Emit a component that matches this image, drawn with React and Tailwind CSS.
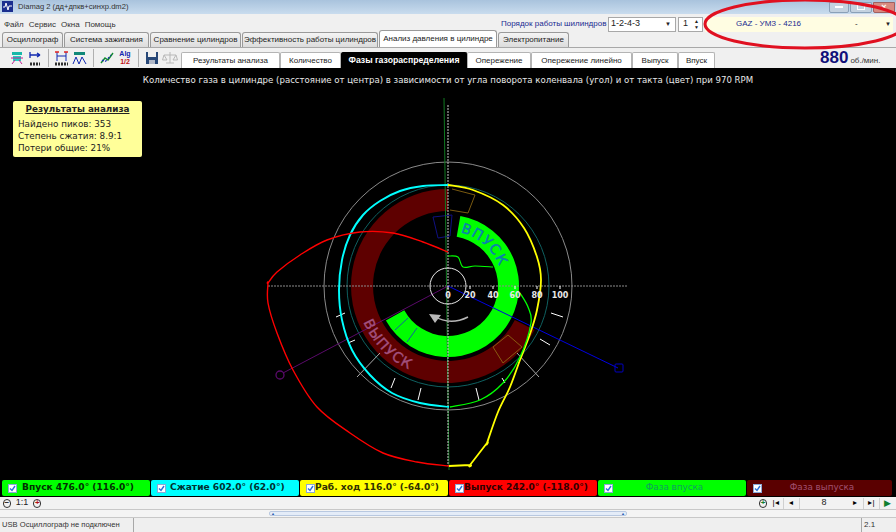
const CX = 448
const CY = 286

// clockwise from the top of the diagram
function pt(r, deg) {
  const a = (deg * Math.PI) / 180
  return [CX + r * Math.sin(a), CY - r * Math.cos(a)]
}

function ring(r1, r2, a1, a2) {
  const [x1, y1] = pt(r2, a1)
  const [x2, y2] = pt(r2, a2)
  const [x3, y3] = pt(r1, a2)
  const [x4, y4] = pt(r1, a1)
  const big = a2 - a1 > 180 ? 1 : 0
  return `M${x1} ${y1}A${r2} ${r2} 0 ${big} 1 ${x2} ${y2}L${x3} ${y3}A${r1} ${r1} 0 ${big} 0 ${x4} ${y4}Z`
}

function arc(r, a1, a2, sweep) {
  const [x1, y1] = pt(r, a1)
  const [x2, y2] = pt(r, a2)
  return `M${x1} ${y1}A${r} ${r} 0 0 ${sweep} ${x2} ${y2}`
}

// smooth line through the traced points
function smooth(p) {
  let d = `M${p[0][0]} ${p[0][1]}`
  for (let i = 0; i < p.length - 1; i++) {
    const a = p[Math.max(i - 1, 0)]
    const b = p[i]
    const c = p[i + 1]
    const e = p[Math.min(i + 2, p.length - 1)]
    d += `C${b[0] + (c[0] - a[0]) / 6} ${b[1] + (c[1] - a[1]) / 6} ${c[0] - (e[0] - b[0]) / 6} ${c[1] - (e[1] - b[1]) / 6} ${c[0]} ${c[1]}`
  }
  return d
}

const cyan = [[448, 185], [423, 186], [400, 191], [380, 201], [363, 215], [350, 235], [342, 260], [339, 290], [342, 320], [352, 350], [370, 375], [392, 393], [420, 403], [449, 407]]
const yellow = [[448, 185], [473, 190], [503, 205], [524, 228], [537, 257], [541, 280], [537, 310], [530, 334], [520, 360], [510, 387], [498, 412], [487, 443], [487, 443], [470, 465], [470, 465], [449, 466]]
const red = [[449, 466], [417, 462], [383, 453], [350, 433], [317, 407], [293, 370], [277, 333], [268, 303], [268, 283], [268, 283], [277, 272], [300, 255], [327, 240], [360, 232], [393, 233], [423, 242], [448, 252]]
const greenOuter = [[450, 407], [480, 400], [503, 383], [520, 357], [531, 323], [528, 307], [520, 293]]
const greenInner = [[448, 256], [458, 257], [463, 267], [475, 266], [493, 267]]

const ticks = [
  [336, 317, 345, 313, '#fff'], [348, 343, 355, 340, '#fff'], [357, 377, 380, 353, '#aaa'], [391, 388, 395, 378, '#fff'],
  [418, 400, 421, 388, '#fff'], [479, 400, 476, 388, '#fff'], [505, 383, 502, 378, '#fff'], [539, 377, 517, 353, '#aaa'],
  [550, 345, 540, 339, '#fff'], [563, 317, 551, 313, '#fff'],
]

const labels = [[448, '0'], [470, '20'], [493, '40'], [515, '60'], [537, '80'], [560, '100']]

function Diagram() {
  return (
    <svg width="896" height="412" viewBox="0 68 896 412" className="block">
      <defs>
        <path id="inletPath" d={arc(55, 13, 66, 1)} />
        <path id="exhaustPath" d={arc(92, 247, 200, 0)} />
      </defs>

      <circle cx={CX} cy={CY} r="124" fill="none" stroke="#8a8a8a" />
      <path d={ring(75, 97, 117, 360)} fill="#5e0000" />
      <path d={ring(71, 74, 100, 245)} fill="#000" />
      <path d={ring(50, 71, 10, 241)} fill="#00ff00" />
      <circle cx={CX} cy={CY} r="101" fill="none" stroke="#0f6060" />

      <path d="M452 189L475 195L468 213L450 210" fill="none" stroke="#7a5a10" />
      <path d="M433 217L452 215L450 236L438 238Z" fill="none" stroke="#101080" />
      <path d="M493 347L508 335L522 347L503 363Z" fill="none" stroke="#8a5a10" />
      <path d="M395 330L408 318M407 342L417 328" stroke="#1060a0" />

      <path d="M268 286H628" stroke="#8c8c8c" strokeDasharray="2 1" />
      <path d="M444 98L449 470" stroke="#0f7a20" />
      <path d="M448 105V466" stroke="#c8c8c8" strokeDasharray="2 1" />

      <path d="M448 286L618 368" stroke="#0000e0" />
      <rect x="615" y="364" width="8" height="8" rx="1" fill="none" stroke="#0000c0" />
      <path d="M448 286L283 373" stroke="#5a0a6a" />
      <circle cx="280" cy="375" r="4" fill="none" stroke="#5a0a6a" strokeWidth="1.3" />

      {ticks.map((t, i) => (
        <path key={i} d={`M${t[0]} ${t[1]}L${t[2]} ${t[3]}`} stroke={t[4]} />
      ))}

      <circle cx={CX} cy={CY} r="18" fill="none" stroke="#e8e8e8" />
      <path d="M468 317Q450 326 434 316" fill="none" stroke="#b8b8b8" strokeWidth="1.4" />
      <path d="M429 314L441 315L435 323Z" fill="#b8b8b8" />

      <path d={smooth(cyan)} fill="none" stroke="#00ffff" strokeWidth="1.9" />
      <path d={smooth(yellow)} fill="none" stroke="#ffff00" strokeWidth="1.8" />
      <path d={smooth(red)} fill="none" stroke="#ff0000" strokeWidth="1.4" />
      <path d={smooth(greenOuter)} fill="none" stroke="#00ff00" strokeWidth="1.3" />
      <path d={smooth(greenInner)} fill="none" stroke="#00ff00" strokeWidth="1.1" />

      {labels.map(([x, text]) => (
        <g key={text}>
          <path d={`M${x} 286V289`} stroke="#fff" />
          <text x={x} y="298" textAnchor="middle" fill="#e8e8e8" className="font-['DejaVu_Sans',sans-serif] text-[8px] font-bold">{text}</text>
        </g>
      ))}

      <text fill="#0b7fb0" letterSpacing="1.2" stroke="#0b7fb0" strokeWidth="0.4" className="font-['DejaVu_Sans',sans-serif] text-[14px]">
        <textPath href="#inletPath">ВПУСК</textPath>
      </text>
      <text fill="#a2507e" letterSpacing="1.2" stroke="#a2507e" strokeWidth="0.4" className="font-['DejaVu_Sans',sans-serif] text-[14px]">
        <textPath href="#exhaustPath">ВЫПУСК</textPath>
      </text>
    </svg>
  )
}

function Tab({ w, active, children }) {
  return (
    <div className={`flex ${w} items-center justify-center self-end whitespace-nowrap rounded-t-[3px] border border-b-0 border-[#9a9a9a] ${active ? 'h-[17px] bg-white' : 'h-[15px] bg-gradient-to-b from-[#f4f4f4] to-[#dcdcdc]'}`}>
      {children}
    </div>
  )
}

function SubTab({ w, active, children }) {
  return (
    <div className={`flex h-[16px] ${w} items-center justify-center whitespace-nowrap rounded-t-[2px] border border-b-0 ${active ? 'border-black bg-black text-[8.7px] font-bold text-white' : 'border-[#b4b4b4] bg-white text-[#222]'}`}>
      {children}
    </div>
  )
}

function ToolSep() {
  return <div className="mx-[4px] h-[18px] w-px bg-[#b0b0b0]" />
}

function ToolIcon({ children }) {
  return (
    <svg width="16" height="16" viewBox="0 0 16 16" className="mx-[1px] shrink-0">
      {children}
    </svg>
  )
}

function Legend({ w, bg, color, gap, children }) {
  return (
    <div className={`flex h-[16px] ${w} items-center rounded-[2px] pl-[6px] ${bg}`}>
      <span className="flex h-[9px] w-[9px] shrink-0 items-center justify-center border border-[#8aa8d8] bg-white">
        <svg width="7" height="7" viewBox="0 0 7 7">
          <path d="M1 3.5L3 5.5L6 1" fill="none" stroke="#2a70d8" strokeWidth="1.4" />
        </svg>
      </span>
      {gap ? (
        <span className={`${gap} whitespace-nowrap font-['DejaVu_Sans',sans-serif] text-[9.1px] font-bold ${color}`}>{children}</span>
      ) : (
        <span className={`flex-1 pr-[10px] text-center font-['DejaVu_Sans',sans-serif] text-[8.8px] ${color}`}>{children}</span>
      )}
    </div>
  )
}

function NavButton({ children }) {
  return <div className="flex h-[11px] w-[16px] items-center justify-center border-r border-[#d0d0d0] text-[8px] leading-none text-black">{children}</div>
}

export default function App() {
  return (
    <div className="relative flex h-[532px] w-[896px] flex-col overflow-hidden bg-[#f0f0f0] font-['Liberation_Sans',sans-serif] text-[8px] text-[#222]">
      {/* title bar */}
      <div className="flex h-[14px] items-center justify-between bg-gradient-to-b from-[#a9c3dd] to-[#c9dcee]">
        <div className="flex items-center">
          <svg width="11" height="11" viewBox="0 0 11 11" className="ml-[2px]">
            <rect width="11" height="11" fill="#1b2f8f" />
            <path d="M1 6H3L4 2L6 9L7 5H10" fill="none" stroke="#fff" />
          </svg>
          <span className="ml-[5px] text-[7.6px] text-[#333]">Diamag 2 (дд+дпкв+синхр.dm2)</span>
        </div>
        <div className="mr-[1px] flex h-[11px] items-center gap-[1px]">
          <div className="flex h-full w-[20px] items-center justify-center rounded-b-[2px] border border-[#8aa0b8] bg-[#c4d2e0]"><div className="h-[2px] w-[8px] bg-white" /></div>
          <div className="flex h-full w-[22px] items-center justify-center rounded-b-[2px] border border-[#8aa0b8] bg-[#c4d2e0]"><div className="h-[6px] w-[8px] border border-white" /></div>
          <div className="flex h-full w-[22px] items-center justify-center rounded-b-[2px] border border-[#a06060] bg-[#d88a80] text-[9px] font-bold leading-none text-white">×</div>
        </div>
      </div>

      {/* menu row */}
      <div className="flex h-[18px] items-center pt-[2px]">
        <div className="ml-[4px] flex w-[497px] gap-[5px] pt-[2px] text-[8px] text-[#333]">
          <span>Файл</span>
          <span>Сервис</span>
          <span>Окна</span>
          <span>Помощь</span>
        </div>
        <span className="w-[107px] whitespace-nowrap text-[8px] text-[#1a2a90]">Порядок работы шилиндров</span>
        <div className="flex h-[15px] w-[68px] items-center justify-between border border-[#a8a8a8] bg-white pl-[2px] pr-[4px] text-[9px]">
          <span>1-2-4-3</span>
          <span className="text-[6px] leading-none">▼</span>
        </div>
        <div className="ml-[2px] flex h-[15px] w-[25px] items-center justify-between border border-[#a8a8a8] bg-white pl-[4px] pr-[3px] text-[9px]">
          <span>1</span>
          <span className="flex flex-col text-[5px] leading-[6px]"><span>▲</span><span>▼</span></span>
        </div>
        <div className="ml-[2px] flex h-[15px] w-[188px] items-center bg-[#fffde2] pl-[31px] pr-[2px]">
          <span className="w-[119px] text-[#1a2a90]">GAZ - УМЗ - 4216</span>
          <span className="flex-1">-</span>
          <span className="text-[6px] leading-none">▼</span>
        </div>
      </div>

      {/* main tabs */}
      <div className="flex h-[16px] items-end gap-[1px] border-b border-[#a8a8a8] pl-[2px] text-[8px] text-[#222]">
        <Tab w="w-[61px]">Осциллограф</Tab>
        <Tab w="w-[85px]">Система зажигания</Tab>
        <Tab w="w-[91px]">Сравнение цилиндров</Tab>
        <Tab w="w-[136px]">Эффективность работы цилиндров</Tab>
        <Tab w="w-[118px]" active>Анализ давления в цилиндре</Tab>
        <Tab w="w-[71px]">Электропитание</Tab>
      </div>

      {/* toolbar with sub tabs */}
      <div className="flex h-[20px] items-end text-[8px]">
        <div className="ml-[8px] flex w-[173px] items-center self-center">
          <ToolIcon>
            <rect x="3" y="2" width="10" height="3" fill="#18b8a8" />
            <rect x="4" y="6" width="8" height="5" fill="#20d0c0" />
            <path d="M2 8H14M3 14L6 10M13 14L10 10" stroke="#c02090" />
          </ToolIcon>
          <ToolIcon>
            <path d="M3 2V8M3 5H12M13 5L10 3M13 5L10 7" fill="none" stroke="#1028b0" strokeWidth="1.3" />
            <path d="M3 14H13" stroke="#303030" strokeDasharray="2 1" strokeWidth="3" />
          </ToolIcon>
          <ToolSep />
          <ToolIcon>
            <path d="M3 2V11M12 2V11M3 6H12" stroke="#1028b0" />
            <path d="M1 2H5" stroke="#e02020" strokeWidth="1.5" />
            <path d="M10 2H14" stroke="#e02020" strokeWidth="1.5" />
            <path d="M1 14H14" stroke="#303030" strokeDasharray="2 1" strokeWidth="3" />
          </ToolIcon>
          <ToolIcon>
            <rect x="2" y="2" width="11" height="3" fill="#108878" />
            <path d="M1 14L4 7L7 14L10 7L14 14" fill="none" stroke="#1028b0" />
          </ToolIcon>
          <ToolSep />
          <ToolIcon>
            <path d="M2 13L6 8L9 10L14 3" fill="none" stroke="#108830" strokeWidth="1.4" />
            <path d="M3 10L6 12L12 5" fill="none" stroke="#1028b0" strokeWidth="1.2" strokeDasharray="2 2" />
          </ToolIcon>
          <div className="mx-[1px] flex w-[16px] flex-col items-center text-[7px] font-bold leading-[8px]">
            <span className="text-[#1028b0]">Alg</span>
            <span className="text-[#c01010]">1/2</span>
          </div>
          <ToolSep />
          <ToolIcon>
            <rect x="2" y="2" width="12" height="12" fill="#284878" />
            <rect x="4" y="2" width="8" height="5" fill="#f0f0f0" />
            <rect x="5" y="10" width="6" height="4" fill="#b0b8c8" />
          </ToolIcon>
          <ToolIcon>
            <path d="M8 2V13M4 13H12M2 5H14M2 5L0.5 10H5ZM14 5L11 10H15.5Z" fill="none" stroke="#b8b8b8" />
          </ToolIcon>
        </div>
        <SubTab w="w-[99px]">Результаты анализа</SubTab>
        <SubTab w="w-[61px]">Количество</SubTab>
        <SubTab w="w-[126px]" active>Фазы газораспределения</SubTab>
        <SubTab w="w-[64px]">Опережение</SubTab>
        <SubTab w="w-[101px]">Опережение линейно</SubTab>
        <SubTab w="w-[46px]">Выпуск</SubTab>
        <SubTab w="w-[37px]">Впуск</SubTab>
        <div className="ml-[105px] flex items-baseline whitespace-nowrap pb-[1px]">
          <span className="text-[17px] font-bold leading-[18px] text-[#10107a]">880</span>
          <span className="ml-[2px] text-[8px] text-[#333]">об./мин.</span>
        </div>
      </div>

      {/* plot */}
      <div className="relative h-[412px] bg-black">
        <Diagram />
        <div className="absolute left-0 right-0 top-[6px] text-center font-['DejaVu_Sans',sans-serif] text-[8.6px] leading-[12px] text-[#e8e8e8]">
          Количество газа в цилиндре (расстояние от центра) в зависимости от угла поворота коленвала (угол) и от такта (цвет) при 970 RPM
        </div>
        <div className="absolute left-[13px] top-[33px] h-[56px] w-[129px] rounded-[2px] bg-[#ffff99] px-[5px] pt-[2px] font-['DejaVu_Sans',sans-serif] text-[8.8px] leading-[12px] text-[#222]">
          <div className="mb-[3px] text-center font-bold underline">Результаты анализа</div>
          <div>Найдено пиков: 353</div>
          <div>Степень сжатия: 8.9:1</div>
          <div>Потери общие: 21%</div>
        </div>
      </div>

      {/* legend */}
      <div className="flex h-[17px] gap-[1px] bg-black pl-[2px]">
        <Legend w="w-[148px]" bg="bg-[#00ff00]" color="text-[#003000]" gap="ml-[5px]">Впуск 476.0° (116.0°)</Legend>
        <Legend w="w-[148px]" bg="bg-[#00ffff]" color="text-[#003030]" gap="ml-[4px]">Сжатие 602.0° (62.0°)</Legend>
        <Legend w="w-[148px]" bg="bg-[#ffff00]" color="text-[#303000]" gap="ml-0">Раб. ход 116.0° (-64.0°)</Legend>
        <Legend w="w-[148px]" bg="bg-[#ff0000]" color="text-[#300000]" gap="ml-0">Выпуск 242.0° (-118.0°)</Legend>
        <Legend w="w-[148px]" bg="bg-[#00ff00]" color="text-[#10a060]">Фаза впуска</Legend>
        <Legend w="w-[145px]" bg="bg-[#5a0000]" color="text-[#a05070]">Фаза выпуска</Legend>
      </div>

      {/* zoom and navigation row */}
      <div className="flex h-[12px] items-center bg-[#f2f2f2] text-[9px]">
        <span className="ml-[3px] flex h-[9px] w-[9px] items-center justify-center rounded-full border border-[#333] text-[8px] font-bold leading-none">−</span>
        <span className="w-[27px] text-center">1:1</span>
        <span className="flex h-[9px] w-[9px] items-center justify-center rounded-full border border-[#333] text-[8px] font-bold leading-none text-[#b01010]">+</span>
        <span className="ml-[718px] flex h-[9px] w-[9px] items-center justify-center rounded-full border border-[#333] text-[8px] font-bold leading-none text-[#108030]">+</span>
        <div className="ml-[1px] flex items-center">
          <NavButton>|◂</NavButton>
          <NavButton>◂</NavButton>
          <span className="w-[48px] text-center text-[9px]">8</span>
          <NavButton>▸</NavButton>
          <NavButton>▸|</NavButton>
          <div className="w-[16px] text-center text-[9px] leading-none text-[#108030]">▶</div>
        </div>
      </div>

      {/* scroll bar */}
      <div className="flex h-[9px] items-center border-y border-[#c8c8c8] bg-[#f4f4f4] pl-[269px]">
        <div className="flex h-[5px] w-[358px] items-center justify-between rounded-[2px] border border-[#b8c8e0] bg-[#e4ecf8] px-[1px] text-[4px] leading-none text-[#3060b0]">
          <span>▲</span>
          <span>▲</span>
        </div>
      </div>

      {/* status bar */}
      <div className="flex flex-1 items-center bg-[#efefef] text-[7.6px] text-[#333]">
        <div className="h-full w-[134px] whitespace-nowrap border-r border-[#a8a8a8] pl-[2px] leading-[13px]">USB Осциллограф не подключен</div>
        <div className="h-full w-[728px] border-r border-[#a8a8a8]" />
        <div className="pl-[2px] text-[8px]">2.1</div>
      </div>

      {/* hand-drawn red mark over the screenshot */}
      <svg width="896" height="60" viewBox="0 0 896 60" className="pointer-events-none absolute left-0 top-0">
        <ellipse cx="805" cy="24" rx="100" ry="24" fill="none" stroke="#e01020" strokeWidth="3" />
      </svg>
    </div>
  )
}
